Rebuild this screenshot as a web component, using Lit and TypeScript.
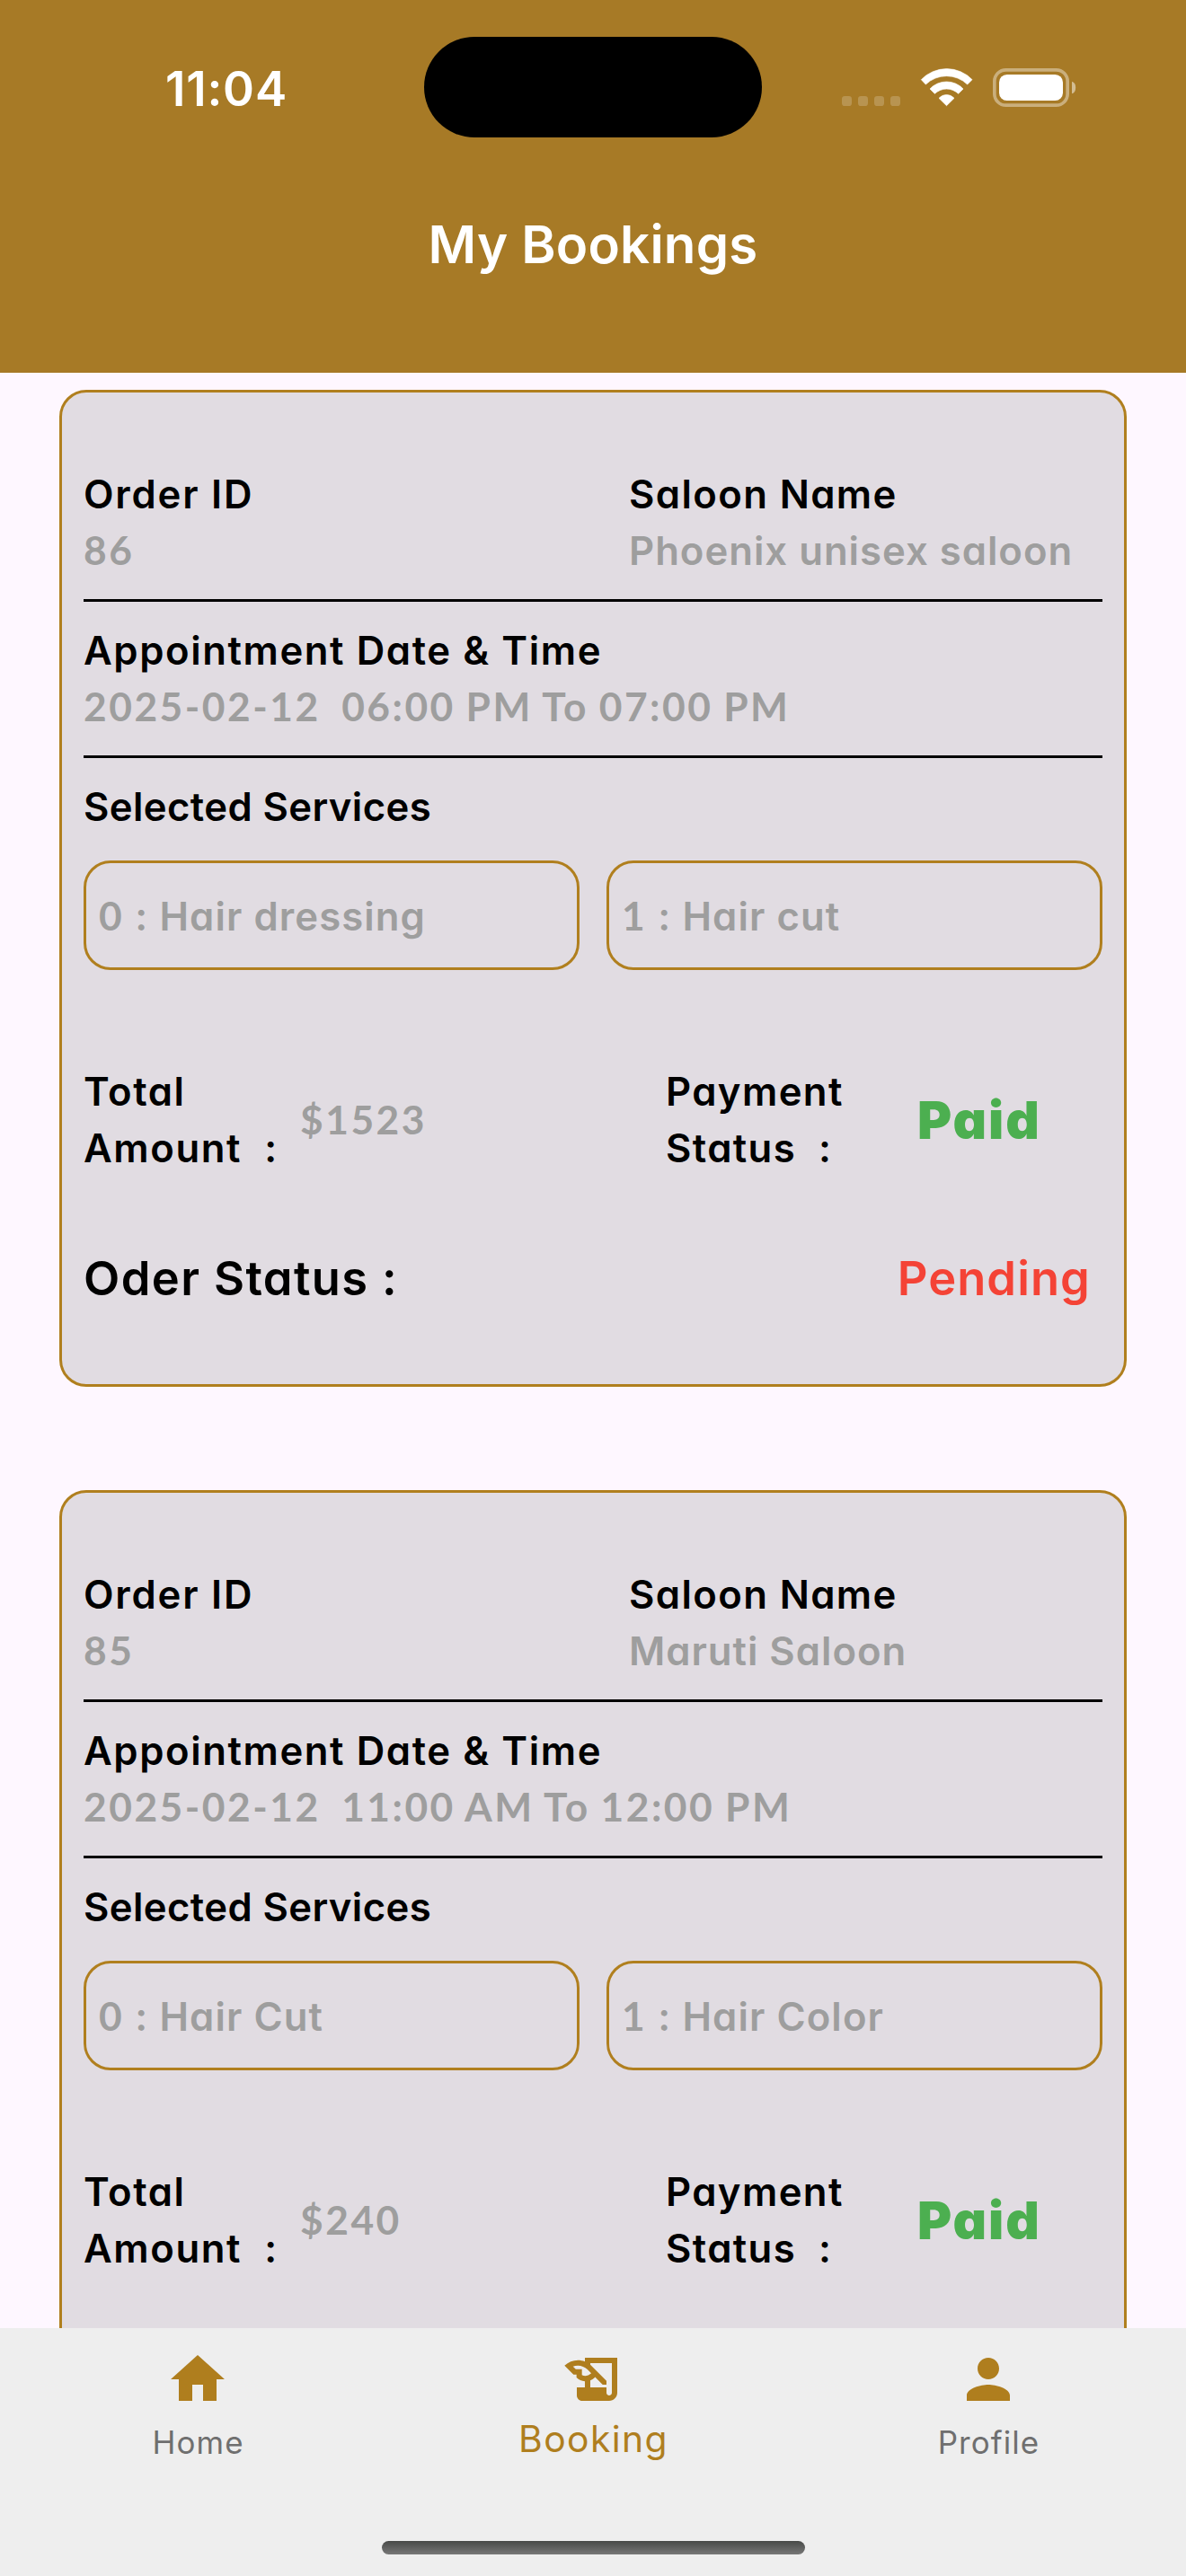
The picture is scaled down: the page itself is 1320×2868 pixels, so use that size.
import { LitElement, html, css, svg, nothing } from "lit";
import { customElement, property } from "lit/decorators.js";
import { classMap } from "lit/directives/class-map.js";

interface Booking {
  id: string;
  saloon: string;
  date: string;
  time: string;
  services: string[];
  total: string;
  status?: string;
}

const bookings: Booking[] = [
  { id: "86", saloon: "Phoenix unisex saloon", date: "2025-02-12", time: "06:00 PM To 07:00 PM", services: ["Hair dressing", "Hair cut"], total: "$1523", status: "Pending" },
  { id: "85", saloon: "Maruti Saloon", date: "2025-02-12", time: "11:00 AM To 12:00 PM", services: ["Hair Cut", "Hair Color"], total: "$240" },
];

@customElement("status-bar")
class StatusBar extends LitElement {
  static styles = css`
    :host { display: flex; align-items: center; height: 112px; padding: 41px 0 0 184px; color: #fff; }
    .time { width: 288px; flex: none; padding-top: 3px; font: 600 53px/64px Inter, sans-serif; letter-spacing: 0.8px; }
    .island { width: 376px; height: 112px; flex: none; border-radius: 56px; background: #000; }
    svg { width: 261px; height: 43px; margin-left: 89px; display: block; flex: none; }
  `;
  render() {
    return html`
      <div class="time">11:04</div>
      <div class="island"></div>
      <svg viewBox="111 75 783 129" fill="#fff">
        ${[111, 165, 219, 273].map((x) => svg`<rect x=${x} y="168" width="33" height="33" rx="10" opacity=".2"></rect>`)}
        <g stroke="#fff" stroke-width="2" stroke-linejoin="round">
          <path d="M376 113A118 118 0 0 1 546 113L530 129A100 100 0 0 0 391 129Z"></path>
          <path d="M405 144A76 76 0 0 1 516 144L500 160A57 57 0 0 0 421 160Z"></path>
          <path d="M435 175A34 34 0 0 1 486 175L460.500 200Z"></path>
        </g>
        <rect x="620.500" y="80.500" width="244" height="118" rx="38" fill="none" stroke="#fff" stroke-width="11" opacity=".4"></rect>
        <rect x="636" y="96" width="213" height="87" rx="26"></rect>
        <path d="M879 119A16 21 0 0 1 879 160Z" opacity=".5"></path>
      </svg>
    `;
  }
}

@customElement("booking-card")
class BookingCard extends LitElement {
  @property({ attribute: false }) booking!: Booking;

  static styles = css`
    :host {
      display: flex; flex-direction: column; box-sizing: border-box; flex: none;
      width: 1188px; height: 1110px; padding: 82px 24px 0;
      border: 3px solid #b07f1e; border-radius: 30px; background: #e1dce2;
      font: 590 43.65px/63px Inter, sans-serif; font-feature-settings: "cv11";
      letter-spacing: 1.4px; color: #000; white-space: pre;
    }
    .value { color: #9e9e9e; letter-spacing: 1px; }
    .figure { font: 700 44.3px/1 Lato, sans-serif; letter-spacing: 2.5px; word-spacing: -1.5px; }
    .heads { display: grid; grid-template-columns: 607px 1fr; }
    .rule { height: 3px; margin: 22px 0 23px; background: #000; }
    .wide { letter-spacing: 1.8px; }
    .long { letter-spacing: 1.6px; }
    .tight { letter-spacing: 0.4px; }
    .services { display: grid; grid-template-columns: 1fr 1fr; gap: 30px; margin-top: 28px; }
    .service {
      display: flex; align-items: center; box-sizing: border-box; height: 122px; padding: 2px 0 0 14px;
      border: 3px solid #b07f1e; border-radius: 30px; letter-spacing: 1.1px;
    }
    .amounts { display: flex; align-items: center; margin-top: 104px; }
    .total { width: 241px; letter-spacing: 1.6px; }
    .sum { width: 407px; }
    .pay { width: 280px; }
    .paid { font-size: 58.2px; font-weight: 860; letter-spacing: 2px; color: #4caf50; }
    .status { display: flex; justify-content: space-between; margin-top: 75px; padding-right: 13px; font-size: 52.4px; line-height: 76px; }
    .pending { letter-spacing: 1.1px; color: #f44336; }
  `;

  render() {
    const b = this.booking;
    return html`
      <div class="heads">
        <div class="wide">Order ID</div>
        <div>Saloon Name</div>
        <div class="value"><span class="figure">${b.id}</span></div>
        <div class="value">${b.saloon}</div>
      </div>
      <div class="rule"></div>
      <div class="long">Appointment Date &amp; Time</div>
      <div class="value"><span class="figure">${b.date}\u00a0\u00a0${b.time}</span></div>
      <div class="rule"></div>
      <div class="tight">Selected Services</div>
      <div class="services">
        ${b.services.map((name, i) => html`<div class="value service"><div><span class="figure">${i}</span> : ${name}</div></div>`)}
      </div>
      <div class="amounts">
        <div class="total"><div>Total</div><div>Amount\u00a0\u00a0:</div></div>
        <div class="sum value"><span class="figure">${b.total}</span></div>
        <div class="pay"><div>Payment</div><div>Status\u00a0\u00a0:</div></div>
        <div class="paid">Paid</div>
      </div>
      ${b.status
        ? html`<div class="status"><div>Oder Status :</div><div class="pending">${b.status}</div></div>`
        : nothing}
    `;
  }
}

const tabs = [
  { label: "Home", active: false, path: "M10 20v-6h4v6h5v-8h3L12 3 2 12h3v8z" },
  {
    label: "Booking",
    active: true,
    path: "M9 4v1.38c-.83-.33-1.72-.5-2.61-.5-1.79 0-3.58.68-4.95 2.050l3.330 3.330h1.110v1.110c.86.86 1.980 1.310 3.110 1.360V15H6v3c0 1.100.9 2 2 2h10c1.660 0 3-1.340 3-3V4H9zm-1.110 6.410V8.260H5.610L4.570 7.220a5.070 5.070 0 0 1 1.820-.34c1.340 0 2.590.52 3.540 1.460l1.410 1.410-.2.2a2.700 2.700 0 0 1-1.920.8c-.47 0-.93-.12-1.330-.34zM19 17c0 .55-.45 1-1 1s-1-.45-1-1v-2h-6v-2.590c.57-.23 1.100-.57 1.560-1.030l.2-.2L15.590 14H17v-1.410l-6-5.970V6h8v11z",
  },
  { label: "Profile", active: false, path: "M12 12c2.210 0 4-1.790 4-4s-1.790-4-4-4-4 1.790-4 4 1.790 4 4 4zm0 2c-2.670 0-8 1.340-8 4v2h16v-2c0-2.660-5.330-4-8-4z" },
];

@customElement("tab-bar")
class TabBar extends LitElement {
  static styles = css`
    :host { display: flex; flex-direction: column; align-items: center; flex: none; height: 276px; background: #eeeeee; font-family: Inter, sans-serif; }
    .tabs { display: grid; grid-template-columns: repeat(3, 1fr); width: 100%; height: 237px; }
    .tab { display: flex; flex-direction: column; align-items: center; padding-top: 21px; gap: 12px; }
    .tab.active { gap: 8px; }
    svg { width: 72px; height: 72px; fill: #af7e1e; display: block; }
    .label { font-size: 34.9px; line-height: 44px; letter-spacing: 1.1px; padding-left: 1px; color: #6f6f6f; }
    .active .label { font-size: 40.8px; letter-spacing: 1.4px; color: #af7e1e; }
    .handle { width: 471px; height: 15px; border-radius: 8px; background: linear-gradient(#484a48, #777777); }
  `;
  render() {
    return html`
      <div class="tabs">
        ${tabs.map((t) => html`
          <div class=${classMap({ tab: true, active: t.active })}>
            <svg viewBox="0 0 24 24"><path d=${t.path}></path></svg>
            <div class="label">${t.label}</div>
          </div>`)}
      </div>
      <div class="handle"></div>
    `;
  }
}

@customElement("app-root")
class AppRoot extends LitElement {
  static styles = css`
    :host { display: flex; flex-direction: column; width: 1320px; height: 2868px; overflow: hidden; background: #fef7ff; }
    header { height: 415px; flex: none; background: #a77a26; }
    h1 {
      margin: 82px 0 0; text-align: center; color: #fff;
      font: 590 58.2px/74px Inter, sans-serif; font-feature-settings: "cv11"; letter-spacing: 0.2px;
    }
    main { display: flex; flex-direction: column; align-items: center; gap: 115px; flex: 1; min-height: 0; overflow: hidden; padding-top: 19px; box-sizing: border-box; }
  `;
  render() {
    return html`
      <header>
        <status-bar></status-bar>
        <h1>My Bookings</h1>
      </header>
      <main>${bookings.map((b) => html`<booking-card .booking=${b}></booking-card>`)}</main>
      <tab-bar></tab-bar>
    `;
  }
}
